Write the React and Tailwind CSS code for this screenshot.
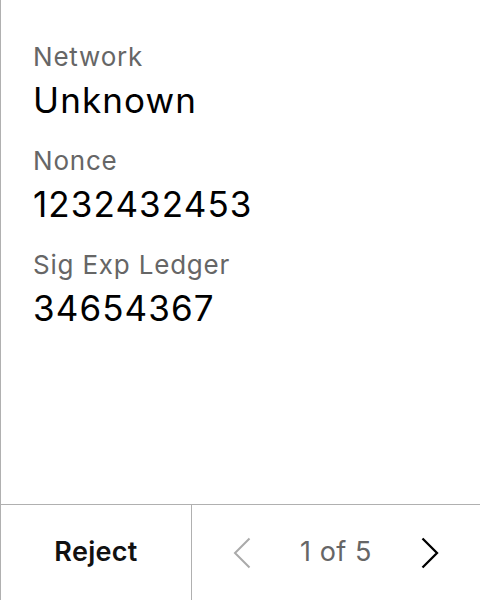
import React from "react";

function Field({ label, value }) {
  return (
    <div className="flex flex-col">
      <div className="text-[26px] leading-[30px] tracking-[0.8px] text-[#666666]">{label}</div>
      <div className="mt-[7px] text-[35px] leading-[42px] tracking-[1.1px] text-black">{value}</div>
    </div>
  );
}

export default function App() {
  return (
    <div
      className="w-[480px] h-[600px] flex flex-col bg-white border-l border-[#b0b0b0]"
      style={{ fontFamily: "Inter, 'Noto Sans', sans-serif" }}
    >
      <div className="flex-1 flex flex-col gap-[25px] pt-[42px] pl-[32px]">
        <Field label="Network" value="Unknown" />
        <Field label="Nonce" value="1232432453" />
        <Field label="Sig Exp Ledger" value="34654367" />
      </div>
      <div className="h-[96px] flex border-t border-[#b0b0b0]">
        <div className="w-[191px] flex items-center justify-center border-r border-[#b0b0b0]">
          <span className="text-[27px] font-semibold tracking-[0.3px] text-[#111111]">Reject</span>
        </div>
        <div className="flex-1 flex items-center justify-center gap-[49px]">
          <svg width="18" height="32" viewBox="0 0 18 32" fill="none" stroke="#aaaaaa" strokeWidth="2">
            <path d="M16.5 1.5 L2 16 L16.5 30.5" />
          </svg>
          <span className="text-[27px] tracking-[0.5px] text-[#666666]">1 of 5</span>
          <svg width="18" height="32" viewBox="0 0 18 32" fill="none" stroke="#000000" strokeWidth="2.3">
            <path d="M1.5 1.5 L16 16 L1.5 30.5" />
          </svg>
        </div>
      </div>
    </div>
  );
}
